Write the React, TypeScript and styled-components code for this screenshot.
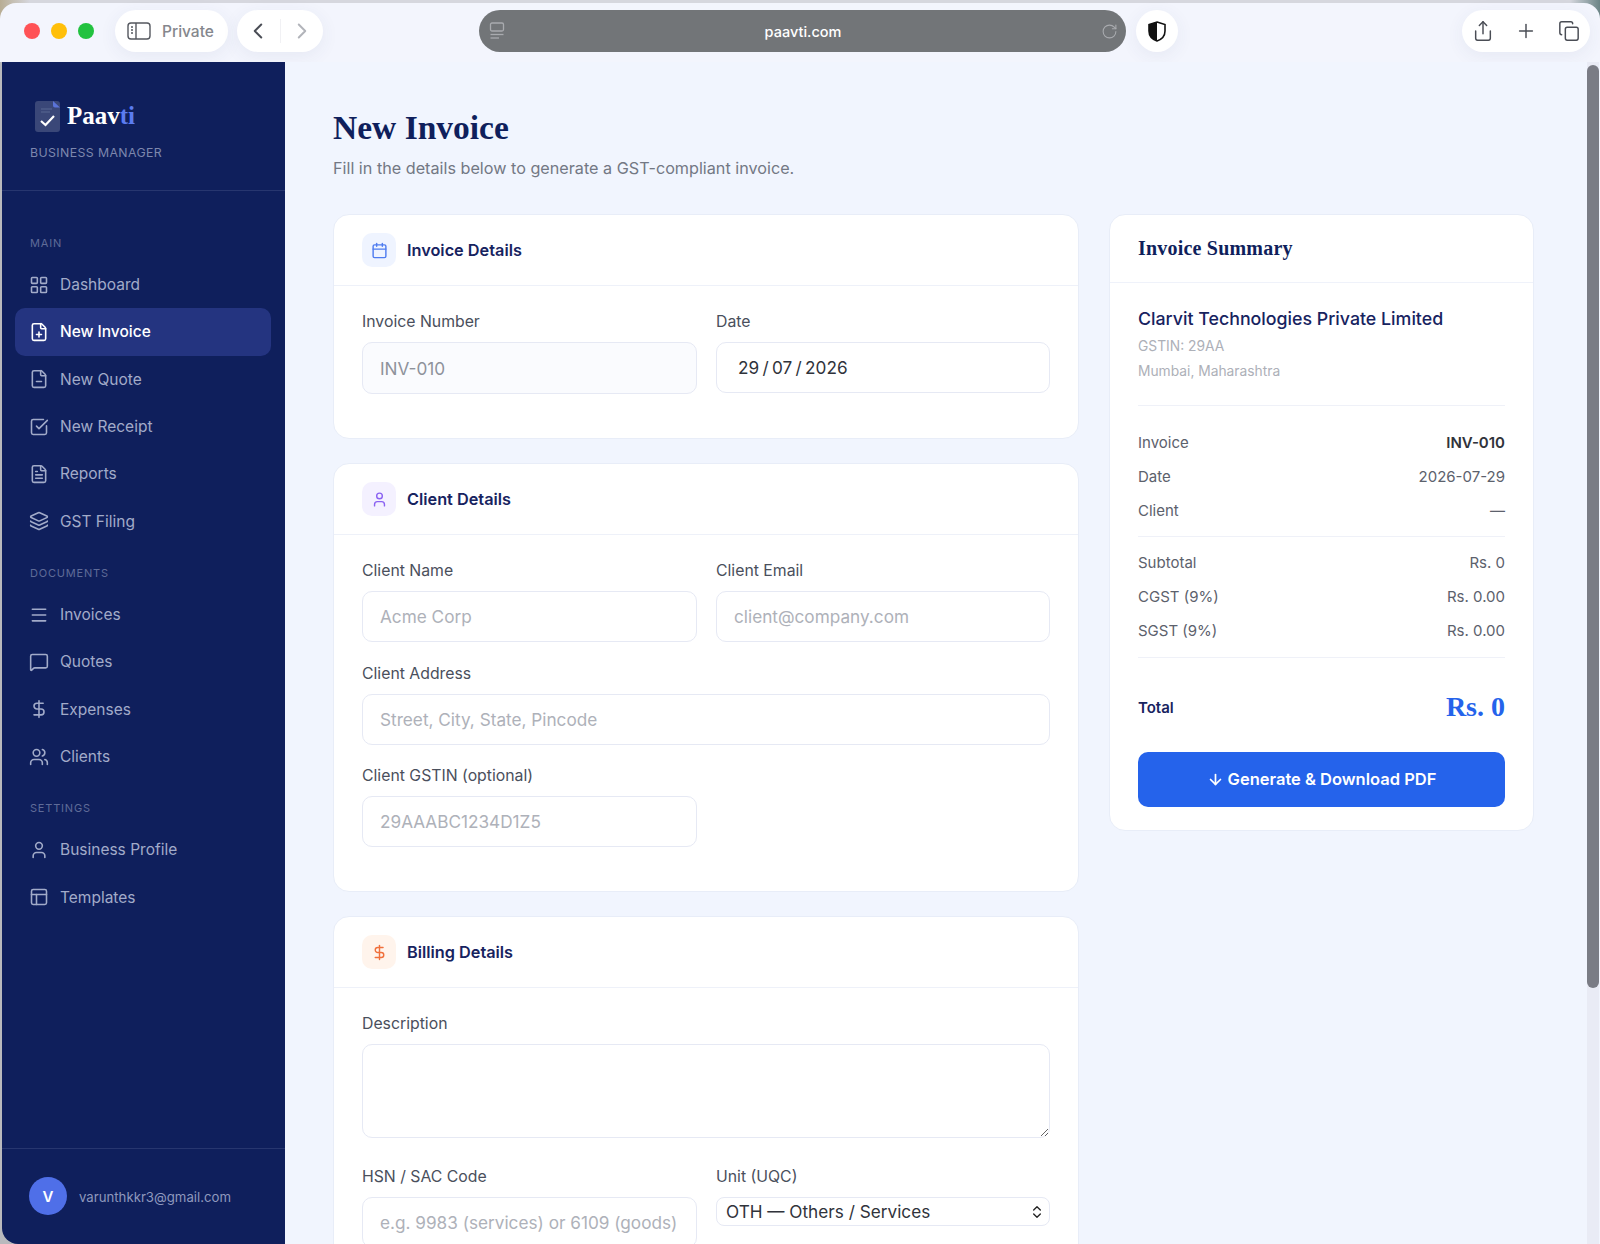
import React from 'react';
import styled, { createGlobalStyle } from 'styled-components';
import {
  Calendar,
  ChevronLeft,
  ChevronRight,
  ChevronsUpDown,
  Copy,
  DollarSign,
  FileMinus,
  FilePlus,
  FileText,
  Layers,
  LayoutGrid,
  Menu,
  MessageSquare,
  PanelsTopLeft,
  Plus,
  RotateCw,
  Share,
  SquareCheckBig,
  User,
  Users,
  ArrowDown,
} from 'lucide-react';

const sans = `Inter, "Noto Sans", "Liberation Sans", sans-serif`;
const serif = `"Liberation Serif", "DejaVu Serif", serif`;

const GlobalStyle = createGlobalStyle`
  html, body {
    margin: 0;
    padding: 0;
    height: 100%;
    overflow: hidden;
    background: linear-gradient(90deg, #b8ad94 0, #d6d7de 30px, #d6d7de calc(100% - 30px), #6b8486 100%);
  }
  * { box-sizing: border-box; }
`;

const navGroups = [
  {
    label: 'MAIN',
    items: [
      { name: 'Dashboard', icon: LayoutGrid },
      { name: 'New Invoice', icon: FilePlus, active: true },
      { name: 'New Quote', icon: FileMinus },
      { name: 'New Receipt', icon: SquareCheckBig },
      { name: 'Reports', icon: FileText },
      { name: 'GST Filing', icon: Layers },
    ],
  },
  {
    label: 'DOCUMENTS',
    items: [
      { name: 'Invoices', icon: Menu },
      { name: 'Quotes', icon: MessageSquare },
      { name: 'Expenses', icon: DollarSign },
      { name: 'Clients', icon: Users },
    ],
  },
  {
    label: 'SETTINGS',
    items: [
      { name: 'Business Profile', icon: User },
      { name: 'Templates', icon: PanelsTopLeft },
    ],
  },
];

function SidebarGlyph() {
  return (
    <svg width="24" height="18" viewBox="0 0 24 18" fill="none" stroke="#55585f" strokeWidth="1.4">
      <rect x="1" y="1" width="22" height="16" rx="3" />
      <line x1="9" y1="1" x2="9" y2="17" />
      <line x1="4" y1="5" x2="6" y2="5" />
      <line x1="4" y1="8" x2="6" y2="8" />
      <line x1="4" y1="11" x2="6" y2="11" />
    </svg>
  );
}

function ReaderGlyph() {
  return (
    <svg width="16" height="18" viewBox="0 0 16 18" fill="none" stroke="#a9abaf" strokeWidth="1.3">
      <rect x="1.5" y="1" width="13" height="8" rx="1.5" />
      <line x1="1.5" y1="12.5" x2="14.5" y2="12.5" />
      <line x1="1.5" y1="16" x2="10" y2="16" />
    </svg>
  );
}

function ShieldGlyph() {
  return (
    <svg width="18" height="21" viewBox="0 0 18 21">
      <path d="M9 1 L17 3.6 V10 C17 15 13.5 18.4 9 20 C4.500 18.400 1 15 1 10 V3.600 Z" fill="#fff" stroke="#111" strokeWidth="1.6" />
      <path d="M9 1 V20 C4.500 18.400 1 15 1 10 V3.600 Z" fill="#111" />
    </svg>
  );
}

function LogoMark() {
  return (
    <svg width="26" height="31" viewBox="0 0 26 31">
      <rect x="0" y="0" width="25" height="31" rx="3" fill="#3a4778" />
      <path d="M18 0 L25 6.500 H20 C18.800 6.500 18 5.700 18 4.500 Z" fill="#5a73d8" />
      <line x1="6" y1="8" x2="17" y2="8" stroke="#55638f" strokeWidth="1.2" />
      <line x1="6" y1="11" x2="15" y2="11" stroke="#55638f" strokeWidth="1.2" />
      <path d="M6 20 L10.500 24 L19 15" fill="none" stroke="#fff" strokeWidth="2.200" />
    </svg>
  );
}

function App() {
  return (
    <Window>
      <GlobalStyle />
      <Toolbar>
        <TrafficLights>
          <Light $color="#ff5256" />
          <Light $color="#ffbf0a" />
          <Light $color="#22c23f" />
        </TrafficLights>
        <PrivatePill>
          <SidebarGlyph />
          <PrivateText>Private</PrivateText>
        </PrivatePill>
        <HistoryPill>
          <ChevronLeft size={26} color="#4a4d55" strokeWidth={1.8} />
          <HistoryDivider />
          <ChevronRight size={26} color="#b2b4ba" strokeWidth={1.8} />
        </HistoryPill>
        <UrlBar>
          <ReaderGlyph />
          <UrlText>paavti.com</UrlText>
          <RotateCw size={17} color="#a9abaf" strokeWidth={1.5} />
        </UrlBar>
        <ShieldPill>
          <ShieldGlyph />
        </ShieldPill>
        <ActionsPill>
          <Share size={22} color="#4a4d55" strokeWidth={1.6} />
          <Plus size={22} color="#4a4d55" strokeWidth={1.6} />
          <Copy size={22} color="#4a4d55" strokeWidth={1.6} />
        </ActionsPill>
      </Toolbar>

      <Body>
        <Sidebar>
          <Brand>
            <BrandRow>
              <LogoMark />
              <BrandName>
                Paav<BrandAccent>ti</BrandAccent>
              </BrandName>
            </BrandRow>
            <BrandTag>BUSINESS MANAGER</BrandTag>
          </Brand>
          <Nav>
            {navGroups.map((group) => (
              <NavGroup key={group.label}>
                <NavLabel>{group.label}</NavLabel>
                {group.items.map((item) => (
                  <NavItem key={item.name} $active={item.active}>
                    <item.icon size={20} strokeWidth={1.9} />
                    {item.name}
                  </NavItem>
                ))}
              </NavGroup>
            ))}
          </Nav>
          <SidebarFooter>
            <Avatar>V</Avatar>
            <Email>varunthkkr3@gmail.com</Email>
          </SidebarFooter>
        </Sidebar>

        <Main>
          <PageTitle>New Invoice</PageTitle>
          <PageSubtitle>Fill in the details below to generate a GST-compliant invoice.</PageSubtitle>
          <Columns>
            <FormColumn>
              <Card>
                <CardHeader>
                  <IconBox $bg="#eff4ff" $fg="#4f7cf0"><Calendar size={17} /></IconBox>
                  <CardTitle>Invoice Details</CardTitle>
                </CardHeader>
                <CardBody>
                  <Row>
                    <Field>
                      <Label>Invoice Number</Label>
                      <Input $readOnly readOnly value="INV-010" />
                    </Field>
                    <Field>
                      <Label>Date</Label>
                      <DateInput readOnly value="29 / 07 / 2026" />
                    </Field>
                  </Row>
                </CardBody>
              </Card>

              <Card>
                <CardHeader>
                  <IconBox $bg="#f4f1ff" $fg="#8b63f2"><User size={17} /></IconBox>
                  <CardTitle>Client Details</CardTitle>
                </CardHeader>
                <CardBody>
                  <Row>
                    <Field>
                      <Label>Client Name</Label>
                      <Input placeholder="Acme Corp" />
                    </Field>
                    <Field>
                      <Label>Client Email</Label>
                      <Input placeholder="client@company.com" />
                    </Field>
                  </Row>
                  <Field>
                    <Label>Client Address</Label>
                    <Input placeholder="Street, City, State, Pincode" />
                  </Field>
                  <Row>
                    <Field>
                      <Label>Client GSTIN (optional)</Label>
                      <Input placeholder="29AAABC1234D1Z5" />
                    </Field>
                  </Row>
                </CardBody>
              </Card>

              <Card>
                <CardHeader>
                  <IconBox $bg="#fff4ec" $fg="#f0703c"><DollarSign size={17} /></IconBox>
                  <CardTitle>Billing Details</CardTitle>
                </CardHeader>
                <CardBody>
                  <Field>
                    <Label>Description</Label>
                    <TextArea />
                  </Field>
                  <TopRow>
                    <Field>
                      <Label>HSN / SAC Code</Label>
                      <Input placeholder="e.g. 9983 (services) or 6109 (goods)" />
                    </Field>
                    <Field>
                      <Label>Unit (UQC)</Label>
                      <SelectWrap>
                        <Select defaultValue="OTH">
                          <option value="OTH">OTH — Others / Services</option>
                        </Select>
                        <SelectChevron>
                          <ChevronsUpDown size={16} color="#222" strokeWidth={2} />
                        </SelectChevron>
                      </SelectWrap>
                    </Field>
                  </TopRow>
                </CardBody>
              </Card>
            </FormColumn>

            <SummaryCard>
              <SummaryHeader>Invoice Summary</SummaryHeader>
              <SummaryBody>
                <CompanyName>Clarvit Technologies Private Limited</CompanyName>
                <CompanyMeta>GSTIN: 29AA</CompanyMeta>
                <CompanyMeta>Mumbai, Maharashtra</CompanyMeta>
                <SummaryGroup>
                  <SummaryRow><span>Invoice</span><StrongValue>INV-010</StrongValue></SummaryRow>
                  <SummaryRow><span>Date</span><span>2026-07-29</span></SummaryRow>
                  <SummaryRow><span>Client</span><span>—</span></SummaryRow>
                </SummaryGroup>
                <SummaryGroup $tight>
                  <SummaryRow><span>Subtotal</span><span>Rs. 0</span></SummaryRow>
                  <SummaryRow><span>CGST (9%)</span><span>Rs. 0.00</span></SummaryRow>
                  <SummaryRow><span>SGST (9%)</span><span>Rs. 0.00</span></SummaryRow>
                </SummaryGroup>
                <TotalRow>
                  <TotalLabel>Total</TotalLabel>
                  <TotalValue>Rs. 0</TotalValue>
                </TotalRow>
                <GenerateButton>
                  <ArrowDown size={17} strokeWidth={2.4} />
                  Generate &amp; Download PDF
                </GenerateButton>
              </SummaryBody>
            </SummaryCard>
          </Columns>
          <ScrollTrack>
            <ScrollThumb />
          </ScrollTrack>
        </Main>
      </Body>
    </Window>
  );
}

const Window = styled.div`
  width: 1600px;
  height: 1244px;
  padding-top: 3px;
  overflow: hidden;
`;

const Toolbar = styled.header`
  height: 59px;
  padding-top: 7px;
  display: flex;
  align-items: flex-start;
  background: #f3f5fd;
  border-radius: 16px 16px 0 0;
  font-family: ${sans};
`;

const TrafficLights = styled.div`
  width: 115px;
  height: 42px;
  padding-left: 24px;
  display: flex;
  align-items: center;
  gap: 11px;
`;

const Light = styled.span<{ $color: string }>`
  width: 16px;
  height: 16px;
  border-radius: 50%;
  background: ${(p) => p.$color};
`;

const Pill = styled.div`
  height: 42px;
  display: flex;
  align-items: center;
  background: #fff;
  border-radius: 21px;
  box-shadow: 0 4px 18px rgba(60, 70, 120, 0.07);
`;

const PrivatePill = styled(Pill)`
  width: 113px;
  padding-left: 12px;
  gap: 11px;
`;

const PrivateText = styled.span`
  font-size: 15.500px;
  font-weight: 500;
  color: #85878d;
`;

const HistoryPill = styled(Pill)`
  width: 86px;
  margin-left: 9px;
  justify-content: space-between;
  padding: 0 8px;
`;

const HistoryDivider = styled.span`
  width: 1px;
  height: 24px;
  background: #f1f1f4;
`;

const UrlBar = styled.div`
  width: 647px;
  height: 42px;
  margin-left: 156px;
  padding: 0 8px 0 10px;
  display: flex;
  align-items: center;
  justify-content: space-between;
  background: #727578;
  border-radius: 21px;
`;

const UrlText = styled.span`
  font-size: 14.500px;
  font-weight: 500;
  color: #fff;
`;

const ShieldPill = styled(Pill)`
  width: 42px;
  margin-left: 10px;
  justify-content: center;
`;

const ActionsPill = styled(Pill)`
  width: 128px;
  margin-left: 284px;
  padding: 0 10px;
  justify-content: space-between;
`;

const Body = styled.div`
  height: 1182px;
  display: flex;
  background: #b9b9bd;
  padding-left: 2px;
`;

const Sidebar = styled.aside`
  width: 283px;
  flex-shrink: 0;
  display: flex;
  flex-direction: column;
  background: #0f1f5c;
  border-bottom-left-radius: 16px;
  font-family: ${sans};
`;

const Brand = styled.div`
  height: 129px;
  padding: 39px 0 0 28px;
  border-bottom: 1px solid #27366f;
`;

const BrandRow = styled.div`
  display: flex;
  align-items: center;
  gap: 6px;
  padding-left: 5px;
`;

const BrandName = styled.span`
  font-family: ${serif};
  font-size: 25px;
  font-weight: 700;
  color: #fff;
  margin-top: -1px;
`;

const BrandAccent = styled.span`
  color: #5b7cf0;
`;

const BrandTag = styled.div`
  margin-top: 13px;
  font-size: 12.300px;
  letter-spacing: 0.4px;
  color: #7d87ad;
`;

const Nav = styled.nav`
  padding: 45px 14px 0 13px;
`;

const NavGroup = styled.div`
  margin-bottom: 21px;
`;

const NavLabel = styled.div`
  height: 14px;
  margin: 0 0 11px 15px;
  font-size: 11px;
  line-height: 14px;
  letter-spacing: 0.8px;
  color: #5f6b98;
`;

const NavItem = styled.div<{ $active?: boolean }>`
  height: 47.330px;
  padding-left: 14px;
  display: flex;
  align-items: center;
  gap: 11px;
  border-radius: 10px;
  font-size: 15.500px;
  font-weight: ${(p) => (p.$active ? 500 : 400)};
  color: ${(p) => (p.$active ? '#ffffff' : '#a2abc9')};
  background: ${(p) => (p.$active ? '#243480' : 'transparent')};
`;

const SidebarFooter = styled.div`
  margin-top: auto;
  height: 96px;
  padding: 28px 0 0 27px;
  display: flex;
  align-items: flex-start;
  gap: 12px;
  border-top: 1px solid #27366f;
`;

const Avatar = styled.div`
  width: 38px;
  height: 38px;
  border-radius: 50%;
  display: flex;
  align-items: center;
  justify-content: center;
  background: #4f6fe8;
  color: #fff;
  font-size: 15px;
  font-weight: 600;
`;

const Email = styled.div`
  line-height: 40px;
  font-size: 13.200px;
  color: #8e98bd;
`;

const Main = styled.main`
  position: relative;
  flex: 1;
  padding: 46px 0 0 48px;
  overflow: hidden;
  background: #f1f5fe;
  font-family: ${sans};
`;

const PageTitle = styled.h1`
  margin: 0 0 8px;
  font-family: ${serif};
  font-size: 33.500px;
  line-height: 40px;
  font-weight: 700;
  color: #0f1f5c;
`;

const PageSubtitle = styled.p`
  margin: 0 0 34px;
  font-size: 16.200px;
  line-height: 24px;
  color: #737884;
`;

const Columns = styled.div`
  display: flex;
  align-items: flex-start;
  gap: 30px;
`;

const FormColumn = styled.div`
  width: 746px;
  display: flex;
  flex-direction: column;
  gap: 24px;
`;

const Card = styled.section`
  padding-bottom: 44px;
  background: #fff;
  border: 1px solid #e8edf8;
  border-radius: 16px;
`;

const CardHeader = styled.div`
  height: 71px;
  padding: 0 28px;
  display: flex;
  align-items: center;
  gap: 11px;
  border-bottom: 1px solid #eef1f9;
`;

const IconBox = styled.div<{ $bg: string; $fg: string }>`
  width: 34px;
  height: 34px;
  border-radius: 10px;
  display: flex;
  align-items: center;
  justify-content: center;
  background: ${(p) => p.$bg};
  color: ${(p) => p.$fg};
`;

const CardTitle = styled.h2`
  margin: 0;
  font-size: 16.300px;
  font-weight: 600;
  color: #17235f;
`;

const CardBody = styled.div`
  padding: 26px 28px 0;
  display: flex;
  flex-direction: column;
  gap: 21.500px;
`;

const Row = styled.div`
  display: grid;
  grid-template-columns: 335px 334px;
  gap: 19px;
`;

const TopRow = styled(Row)`
  margin-top: 7px;
`;

const Field = styled.div`
  display: flex;
  flex-direction: column;
  align-items: stretch;
`;

const Label = styled.label`
  margin-bottom: 10px;
  font-size: 15.800px;
  line-height: 20px;
  font-weight: 400;
  color: #4a4f5c;
`;

const Input = styled.input<{ $readOnly?: boolean }>`
  width: 100%;
  height: ${(p) => (p.$readOnly ? '52px' : '51px')};
  padding: 0 8px 0 17px;
  border: 1px solid #e6e9f4;
  border-radius: 10px;
  outline: none;
  background: ${(p) => (p.$readOnly ? '#fafbfe' : '#fff')};
  font-family: ${sans};
  font-size: 17.200px;
  color: ${(p) => (p.$readOnly ? '#8e929b' : '#23262e')};
  &::placeholder {
    color: #aeb1b9;
  }
`;

const DateInput = styled(Input)`
  padding-left: 21px;
  word-spacing: -1.500px;
  color: #30333b;
`;

const TextArea = styled.textarea`
  width: 100%;
  height: 94px;
  border: 1px solid #e6e9f4;
  border-radius: 10px;
  outline: none;
  resize: vertical;
  background: #fff;
`;

const SelectWrap = styled.div`
  position: relative;
`;

const Select = styled.select`
  width: 100%;
  height: 29px;
  padding: 0 9px;
  appearance: none;
  border: 1px solid #e6e9f4;
  border-radius: 8px;
  outline: none;
  background: #fff;
  font-family: ${sans};
  font-size: 17.200px;
  color: #30333b;
`;

const SelectChevron = styled.span`
  position: absolute;
  top: 7px;
  right: 5px;
  display: flex;
`;

const SummaryCard = styled.aside`
  width: 425px;
  padding-bottom: 23px;
  background: #fff;
  border: 1px solid #e8edf8;
  border-radius: 16px;
`;

const SummaryHeader = styled.h2`
  height: 68px;
  margin: 0;
  padding-left: 28px;
  line-height: 66px;
  font-family: ${serif};
  font-size: 20px;
  font-weight: 700;
  letter-spacing: 0.2px;
  color: #0f1f5c;
  border-bottom: 1px solid #eff2fa;
`;

const SummaryBody = styled.div`
  padding: 24px 28px 0;
`;

const CompanyName = styled.div`
  font-size: 17.800px;
  line-height: 24px;
  font-weight: 500;
  color: #17235f;
  white-space: nowrap;
`;

const CompanyMeta = styled.div`
  margin-top: 5px;
  font-size: 13.800px;
  line-height: 20px;
  color: #adb0b8;
`;

const SummaryGroup = styled.div<{ $tight?: boolean }>`
  margin-top: ${(p) => (p.$tight ? '15px' : '24px')};
  padding-top: ${(p) => (p.$tight ? '16px' : '27px')};
  display: flex;
  flex-direction: column;
  gap: 14px;
  border-top: 1px solid #eff1f8;
`;

const SummaryRow = styled.div`
  display: flex;
  justify-content: space-between;
  font-size: 15px;
  line-height: 20px;
  color: #5c616c;
`;

const StrongValue = styled.span`
  font-weight: 600;
  color: #30333b;
`;

const TotalRow = styled.div`
  margin-top: 15.500px;
  height: 80px;
  padding-top: 20px;
  display: flex;
  align-items: center;
  justify-content: space-between;
  border-top: 1px solid #eff1f8;
`;

const TotalLabel = styled.span`
  font-size: 15px;
  font-weight: 600;
  color: #17235f;
`;

const TotalValue = styled.span`
  font-family: ${serif};
  font-size: 28px;
  font-weight: 700;
  color: #2563eb;
`;

const GenerateButton = styled.button`
  width: 367px;
  height: 55px;
  margin-top: 15px;
  display: flex;
  align-items: center;
  justify-content: center;
  gap: 4px;
  border: none;
  border-radius: 10px;
  background: #2563eb;
  color: #fff;
  font-family: ${sans};
  font-size: 16.500px;
  font-weight: 600;
`;

const ScrollTrack = styled.div`
  position: absolute;
  top: 0;
  right: 1px;
  bottom: 0;
  width: 12px;
  background: #e9ebf5;
  padding-top: 3px;
`;

const ScrollThumb = styled.div`
  width: 12px;
  height: 923px;
  border-radius: 6px;
  background: #7a7c85;
`;

export default App;
